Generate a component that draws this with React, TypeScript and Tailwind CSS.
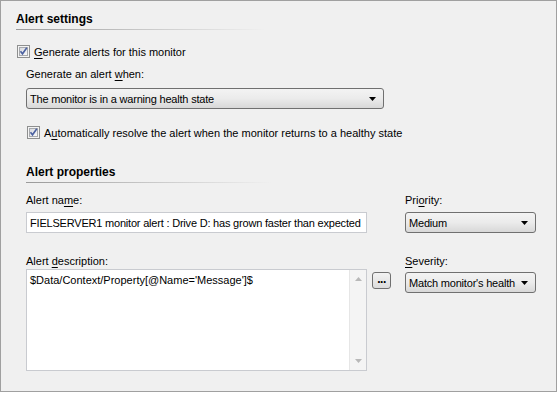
import React from 'react';

function U({ children }: { children: React.ReactNode }) {
  return <span className="underline underline-offset-[2px]">{children}</span>;
}

function Check() {
  return (
    <svg width="13" height="13" viewBox="0 0 13 13" className="shrink-0">
      <defs>
        <linearGradient id="cb" x1="0" y1="0" x2="1" y2="1">
          <stop offset="0" stopColor="#d6d8dd" />
          <stop offset="1" stopColor="#fbfbfc" />
        </linearGradient>
      </defs>
      <rect x="0.5" y="0.5" width="12" height="12" fill="#f4f4f4" stroke="#8e8f8f" />
      <rect x="2.5" y="2.5" width="8" height="8" fill="url(#cb)" stroke="#a7a9ad" strokeWidth="1" />
      <path d="M3.5 6.2 L5.5 8.8 L9.8 2.8" fill="none" stroke="#4b61a0" strokeWidth="1.6" />
    </svg>
  );
}

function Arrow() {
  return (
    <svg width="7" height="4" viewBox="0 0 7 4" className="shrink-0">
      <path d="M0 0h7L3.5 4z" fill="#000" />
    </svg>
  );
}

function Combo({ text, className = '' }: { text: string; className?: string }) {
  return (
    <div
      className={
        'flex h-[21px] items-center justify-between rounded-[3px] border border-[#707070] bg-gradient-to-b from-[#f3f3f3] via-[#ebebeb] to-[#d8d8d8] pl-[3px] pr-[7px] ' +
        className
      }
    >
      <span className="whitespace-nowrap tracking-[-0.2px]">{text}</span>
      <Arrow />
    </div>
  );
}

function Heading({ children, width }: { children: React.ReactNode; width: string }) {
  return (
    <div>
      <div className="h-[16px] text-[12px] font-bold leading-[16px]">{children}</div>
      <div className={'mt-[2px] h-px bg-gradient-to-r from-[#9a9a9a] via-[#c8c8c8] to-transparent ' + width} />
    </div>
  );
}

export default function App() {
  return (
    <div className="h-[392px] w-[557px] border border-[#a0a0a0] bg-[#f0f0f0] font-['Liberation_Sans',Arial,sans-serif] text-[11px] leading-[16px] text-black">
      {/* Alert settings */}
      <div className="pl-[15px] pt-[10px]">
        <Heading width="w-[250px]">Alert settings</Heading>

        <label className="mt-[15px] flex h-[13px] items-center gap-[4px] pl-px">
          <Check />
          <span>
            <U>G</U>enerate alerts for this monitor
          </span>
        </label>

        <div className="pl-[10px]">
          <div className="mt-[8px]">
            Generate an alert <U>w</U>hen:
          </div>
          <Combo className="mt-[6px] w-[358px]" text="The monitor is in a warning health state" />

          <label className="mt-[17px] flex h-[13px] items-center gap-[4px] pl-px">
            <Check />
            <span>
              A<U>u</U>tomatically resolve the alert when the monitor returns to a healthy state
            </span>
          </label>
        </div>
      </div>

      {/* Alert properties */}
      <div className="pl-[25px] pt-[25px]">
        <Heading width="w-[246px]">Alert properties</Heading>

        <div className="mt-[9px] flex">
          <div className="w-[341px]">
            <div>
              Alert na<U>m</U>e:
            </div>
            <div className="mt-[4px] flex h-[21px] items-center border border-[#c9cbd0] bg-white px-[3px] whitespace-nowrap tracking-[-0.2px]">
              FIELSERVER1 monitor alert : Drive D: has grown faster than expected
            </div>

            <div className="mt-[20px]">
              Alert <U>d</U>escription:
            </div>
            <div className="flex h-[102px] border border-[#c9cbd0] bg-white">
              <div className="flex-1 px-[3px] pt-[2px]">$Data/Context/Property[@Name='Message']$</div>
              <div className="flex w-[17px] flex-col items-center justify-between border-l border-[#e6e6e6] bg-[#f4f4f4] py-[7px]">
                <svg width="7" height="4" viewBox="0 0 7 4">
                  <path d="M0 4h7L3.5 0z" fill="#b8b8b8" />
                </svg>
                <svg width="7" height="4" viewBox="0 0 7 4">
                  <path d="M0 0h7L3.5 4z" fill="#b8b8b8" />
                </svg>
              </div>
            </div>
          </div>

          <div className="ml-[5px] w-[20px] pt-[80px]">
            <div className="flex h-[17px] w-[19px] items-center justify-center rounded-[3px] border border-[#707070] bg-gradient-to-b from-[#f3f3f3] to-[#dcdcdc] pb-[4px] text-[12px] font-bold leading-none tracking-[-0.5px]">
              ...
            </div>
          </div>

          <div className="ml-[13px] w-[131px]">
            <div>
              Pri<U>o</U>rity:
            </div>
            <Combo className="mt-[4px]" text="Medium" />
            <div className="mt-[20px]">
              <U>S</U>everity:
            </div>
            <Combo className="mt-[3px] pr-[5px]" text="Match monitor's health" />
          </div>
        </div>
      </div>
    </div>
  );
}
